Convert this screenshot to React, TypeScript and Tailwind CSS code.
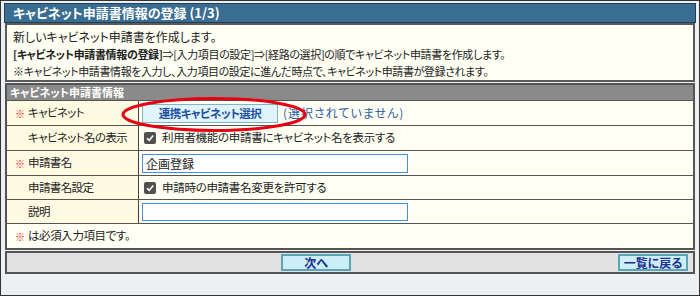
import React from 'react';

const jp = "font-['MS_PGothic','Noto_Sans_CJK_JP',sans-serif]";

function Req() {
  return <span className="text-[#e8202a] text-[10px] w-[12px] inline-block">※</span>;
}

function Check() {
  return (
    <span className="inline-flex items-center justify-center w-[12px] h-[12px] rounded-[2px] bg-[#505050] mr-[6px]">
      <svg width="10" height="10" viewBox="0 0 10 10">
        <path d="M2 5.2 L4.2 7.4 L8.2 2.6" stroke="white" strokeWidth="1.6" fill="none" />
      </svg>
    </span>
  );
}

function Row({ label, req, h, children }: { label: string; req?: boolean; h: string; children?: React.ReactNode }) {
  return (
    <div className={`grid grid-cols-[132px_1fr] ${h} border-b border-[#555]`}>
      <div className="bg-[#fffbe3] border-r border-[#444] flex items-center pl-[8px] text-[#222] text-[11.5px] tracking-[-0.6px]">
        {req ? <Req /> : <span className="w-[12px] inline-block" />}
        <span className="ml-[1px]">{label}</span>
      </div>
      <div className="bg-[#fffff4] flex items-center pl-[3px]">{children}</div>
    </div>
  );
}

export default function App() {
  return (
    <div className={`relative w-[700px] h-[296px] bg-[#edf0f3] border border-[#333] px-[3px] pt-[2px] text-[12px] ${jp} [font-feature-settings:'palt']`}>
      <div className="h-[20px] bg-[#3a6d92] border border-[#1f4058] text-white font-bold text-[13px] leading-[18px] pl-[8px]">
        キャビネット申請書情報の登録 (1/3)
      </div>
      <div className="mx-[1px] h-[59px] border-2 border-[#5a5a5a] bg-[#fffff3] px-[6px] pt-[3px] leading-[17.5px] text-[#222]">
        <div>新しいキャビネット申請書を作成します。</div>
        <div className="text-[11px] tracking-[-0.35px]">
          <span className="font-bold">[キャビネット申請書情報の登録]</span>⇒[入力項目の設定]⇒[経路の選択]の順でキャビネット申請書を作成します。
        </div>
        <div className="text-[11px] tracking-[-0.4px]">※キャビネット申請書情報を入力し、入力項目の設定に進んだ時点で、キャビネット申請書が登録されます。</div>
      </div>
      <div className="mt-[1px] mx-[1px] border-2 border-[#555]">
        <div className="h-[16px] bg-[#8a8a8a] text-white font-bold text-[11px] leading-[15px] pl-[3px] border-b border-[#555]">
          キャビネット申請書情報
        </div>
        <Row label="キャビネット" req h="h-[25px]">
          <button className="h-[19px] w-[136px] bg-[#dff5fb] border border-[#7fb4c8] text-[#1f4fa3] font-bold text-[11.5px] tracking-[-0.5px] leading-[17px]">
            連携キャビネット選択
          </button>
          <span className="ml-[5px] text-[#2b5ea8] tracking-[1px]">(選択されていません)</span>
        </Row>
        <Row label="キャビネット名の表示" h="h-[25px]">
          <span className="ml-[2px]" />
          <Check />
          <span className="text-[#222] text-[11.5px] tracking-[-0.3px]">利用者機能の申請書にキャビネット名を表示する</span>
        </Row>
        <Row label="申請書名" req h="h-[25px]">
          <div className="h-[19px] w-[266px] border border-[#4a8fd6] bg-white pl-[3px] leading-[17px] text-[#222]">企画登録</div>
        </Row>
        <Row label="申請書名設定" h="h-[24px]">
          <span className="ml-[2px]" />
          <Check />
          <span className="text-[#222] text-[11.5px] tracking-[-0.3px]">申請時の申請書名変更を許可する</span>
        </Row>
        <Row label="説明" h="h-[24px]">
          <div className="h-[18px] w-[266px] border border-[#4a8fd6] bg-white" />
        </Row>
        <div className="h-[24px] bg-[#fffff4] flex items-center pl-[8px] text-[#222] text-[11.5px] tracking-[-0.4px]">
          <Req />
          <span className="ml-[1px]">は必須入力項目です。</span>
        </div>
      </div>
      <div className="mt-[1px] mx-[1px] h-[23px] border-2 border-[#555] bg-[#e2e2e2] flex items-center">
        <button className="ml-[274px] h-[17px] w-[70px] bg-[#cdeef6] border-2 border-[#5aa6b8] text-[#1b2f8f] font-bold text-[12px] leading-[13px]">
          次へ
        </button>
        <button className="ml-auto mr-[5px] h-[17px] w-[70px] bg-[#cdeef6] border-2 border-[#5aa6b8] text-[#1b2f8f] font-bold text-[12px] leading-[13px]">
          一覧に戻る
        </button>
      </div>
      <svg className="absolute left-0 top-0 pointer-events-none" width="700" height="296">
        <ellipse cx="213" cy="113.5" rx="91" ry="16" fill="none" stroke="#e60012" strokeWidth="3" />
      </svg>
    </div>
  );
}
